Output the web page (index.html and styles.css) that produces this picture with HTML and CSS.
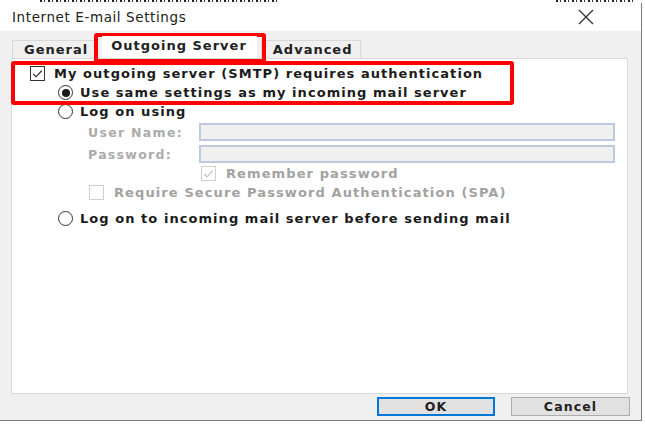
FILE: index.html
```html
<!DOCTYPE html>
<html>
<head>
<meta charset="utf-8">
<link rel="stylesheet" href="styles.css">
</head>
<body>
<div class="strip"><i class="bits bits-l"></i><i class="bits bits-r"></i></div>
<div class="dialog">
  <div class="titlebar">
    <span class="title">Internet E-mail Settings</span>
    <svg class="close" width="16" height="16" viewBox="0 0 16 16"><path d="M1 1 L15 15 M15 1 L1 15" stroke="#333" stroke-width="1.3" fill="none"/></svg>
  </div>
  <div class="body">
    <div class="tabs">
      <div class="tab">General</div>
      <div class="tab active">Outgoing Server</div>
      <div class="tab">Advanced</div>
    </div>
    <div class="panel">
      <div class="row r1">
        <span class="cb"><svg width="14" height="14" viewBox="0 0 14 14"><path d="M2.5 7 L5.5 10 L11.5 3.5" stroke="#222" stroke-width="1.2" fill="none"/></svg></span>
        <span class="lbl">My outgoing server (SMTP) requires authentication</span>
      </div>
      <div class="row r2">
        <span class="rb on"></span>
        <span class="lbl">Use same settings as my incoming mail server</span>
      </div>
      <div class="row r2">
        <span class="rb"></span>
        <span class="lbl">Log on using</span>
      </div>
      <div class="row field">
        <span class="flabel">User Name:</span>
        <span class="input"></span>
      </div>
      <div class="row field">
        <span class="flabel">Password:</span>
        <span class="input"></span>
      </div>
      <div class="row rem">
        <span class="cb dis"><svg width="14" height="14" viewBox="0 0 14 14"><path d="M2.5 7 L5.5 10 L11.5 3.5" stroke="#bdbdbd" stroke-width="1.2" fill="none"/></svg></span>
        <span class="lbl dim">Remember password</span>
      </div>
      <div class="row spa">
        <span class="cb dis"></span>
        <span class="lbl dim">Require Secure Password Authentication (SPA)</span>
      </div>
      <div class="row r2 last">
        <span class="rb"></span>
        <span class="lbl">Log on to incoming mail server before sending mail</span>
      </div>
      <div class="mark mark2"></div>
    </div>
    <div class="buttons">
      <button class="btn ok">OK</button>
      <button class="btn">Cancel</button>
    </div>
    <div class="mark mark1"></div>
  </div>
</div>
</body>
</html>
```
FILE: styles.css
```css
* { box-sizing: border-box; }
html, body { margin: 0; padding: 0; background: #fff; }
body { width: 645px; height: 427px; overflow: hidden; font-family: "DejaVu Sans", sans-serif; color: #1b1b1b; }

.strip { height: 3px; position: relative; }
.bits { position: absolute; top: 0; height: 2px; background: repeating-linear-gradient(90deg, #222 0 2px, transparent 2px 4px, #333 4px 5px, transparent 5px 8px); }
.bits-l { left: 40px; width: 240px; }
.bits-r { left: 556px; width: 80px; }

.dialog { width: 642px; border-right: 1px solid #7a7a7a; border-bottom: 1px solid #7a7a7a; }

.titlebar { height: 28px; background: #fff; display: flex; align-items: center; justify-content: space-between; padding: 0 47px 0 12px; }
.title { font-size: 13.5px; letter-spacing: 0.6px; color: #222; }
.close { display: block; }

.body { background: #f0f0f0; height: 389px; position: relative; padding: 7px 13px 0 11px; }

.tabs { display: flex; align-items: flex-end; height: 20px; padding-left: 1px; }
.tab { height: 18px; font-size: 13px; letter-spacing: 1px; line-height: 18px; padding: 0 7px 0 11px; border: 1px solid #d9d9d9; border-bottom: none; background: #f0f0f0; color: #222; font-weight: 600; }
.tab.active { height: 22px; background: #fff; padding: 0 10px 0 9px; margin: 0 4px 0 6px; position: relative; z-index: 1; border: none; line-height: 20px; }

.panel { position: relative; background: #fff; border: 1px solid #d9d9d9; height: 336px; padding: 5px 0 0 18px; }

.row { display: flex; align-items: center; height: 19px; }
.lbl { font-size: 13px; letter-spacing: 1.05px; font-weight: 600; white-space: nowrap; }
.dim { color: #a2a2a2; letter-spacing: 1.1px; }

.cb { width: 15px; height: 15px; border: 1px solid #333; background: #fff; display: flex; align-items: center; justify-content: center; margin-right: 9px; flex: none; }
.cb.dis { border-color: #cfcfcf; }
.cb svg { display: block; }

.rb { width: 15px; height: 15px; border: 1px solid #333; border-radius: 50%; margin: 0 7px 0 28px; flex: none; display: flex; align-items: center; justify-content: center; }
.rb.on::after { content: ""; width: 8px; height: 8px; border-radius: 50%; background: #1b1b1b; }

.field { height: 22px; padding-left: 58px; }
.flabel { width: 111px; font-size: 12.5px; letter-spacing: 1.3px; color: #ababab; font-weight: 600; }
.input { width: 416px; height: 18px; border: 2px solid #bccadb; background: #f0f0f0; }

.rem { padding-left: 171px; margin-top: -1px; }
.rem .cb { margin-right: 10px; }
.spa { padding-left: 59px; }
.spa .cb { margin-right: 10px; }
.last { margin-top: 7px; }

.buttons { display: flex; justify-content: flex-end; gap: 16px; padding: 3px 0 0 0; margin-right: -2px; }
.btn { width: 119px; height: 19px; font-family: "DejaVu Sans", sans-serif; font-size: 12.5px; letter-spacing: 1.1px; font-weight: 600; color: #222; background: #e1e1e1; border: 1px solid #adadad; padding: 0; }
.btn.ok { border: 2px solid #0078d7; width: 118px; }

.mark { position: absolute; border: 4px solid #ff0000; border-radius: 3px; pointer-events: none; }
.mark1 { left: 94px; top: 2px; width: 172px; height: 30px; }
.mark2 { left: -1px; top: 2px; width: 503px; height: 44px; }
```
